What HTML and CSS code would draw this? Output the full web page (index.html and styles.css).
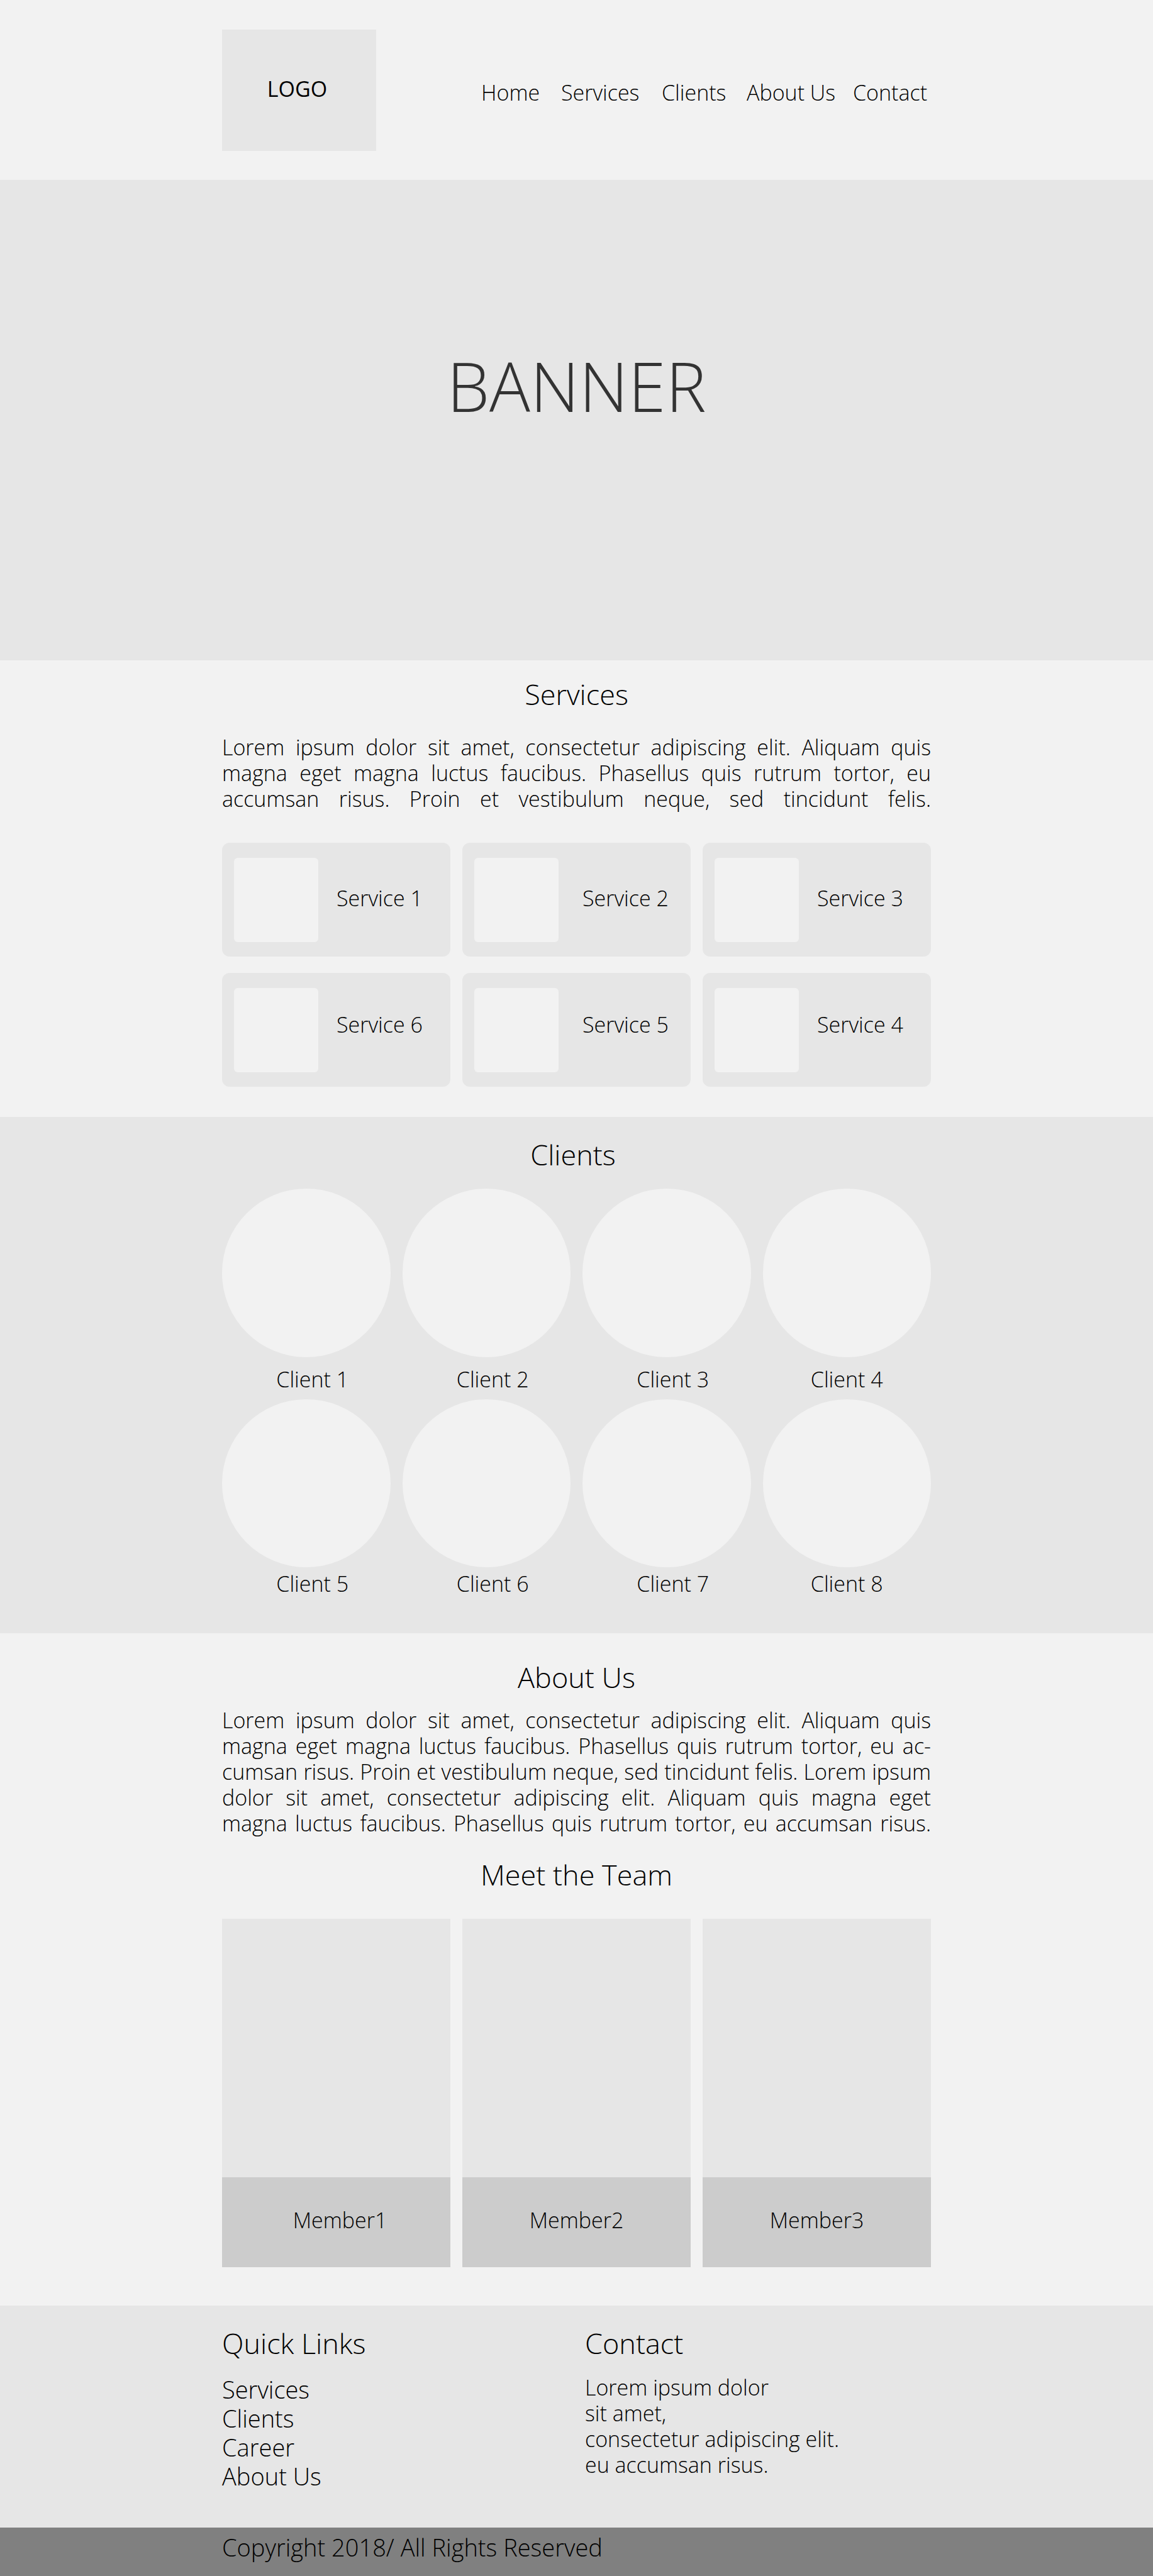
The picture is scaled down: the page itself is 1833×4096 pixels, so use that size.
FILE: index.html
```html
<!DOCTYPE html>
<html lang="en">
<head>
<meta charset="utf-8">
<meta name="viewport" content="width=device-width, initial-scale=1">
<title>Company</title>
<link rel="stylesheet" href="styles.css">
</head>
<body>
<header class="header">
  <div class="container header-row">
    <a class="logo" href="#">LOGO</a>
    <nav class="nav">
      <a href="#">Home</a>
      <a href="#services">Services</a>
      <a href="#clients">Clients</a>
      <a href="#about">About Us</a>
      <a href="#contact">Contact</a>
    </nav>
  </div>
</header>
<main>
  <section class="banner"><h1>BANNER</h1></section>

  <section class="services" id="services">
    <div class="container">
      <h2>Services</h2>
      <p class="copy">Lorem ipsum dolor sit amet, consectetur adipiscing elit. Aliquam quis magna eget magna luctus faucibus. Phasellus quis rutrum tortor, eu accumsan risus. Proin et vestibulum neque, sed tincidunt felis.</p>
      <ul class="service-grid">
        <li class="service"><span class="service-icon"></span><span class="service-name">Service 1</span></li>
        <li class="service service-wide"><span class="service-icon"></span><span class="service-name">Service 2</span></li>
        <li class="service"><span class="service-icon"></span><span class="service-name">Service 3</span></li>
        <li class="service service-raised"><span class="service-icon"></span><span class="service-name">Service 6</span></li>
        <li class="service service-wide service-raised"><span class="service-icon"></span><span class="service-name">Service 5</span></li>
        <li class="service service-raised"><span class="service-icon"></span><span class="service-name">Service 4</span></li>
      </ul>
    </div>
  </section>

  <section class="clients" id="clients">
    <div class="container">
      <h2>Clients</h2>
      <ul class="client-grid">
        <li class="client"><span class="client-photo"></span><span class="client-name">Client 1</span></li>
        <li class="client"><span class="client-photo"></span><span class="client-name">Client 2</span></li>
        <li class="client"><span class="client-photo"></span><span class="client-name">Client 3</span></li>
        <li class="client client-last"><span class="client-photo"></span><span class="client-name">Client 4</span></li>
      </ul>
      <ul class="client-grid client-grid-tight">
        <li class="client"><span class="client-photo"></span><span class="client-name">Client 5</span></li>
        <li class="client"><span class="client-photo"></span><span class="client-name">Client 6</span></li>
        <li class="client"><span class="client-photo"></span><span class="client-name">Client 7</span></li>
        <li class="client client-last"><span class="client-photo"></span><span class="client-name">Client 8</span></li>
      </ul>
    </div>
  </section>

  <section class="about" id="about">
    <div class="container">
      <h2>About Us</h2>
      <p class="copy">Lorem ipsum dolor sit amet, consectetur adipiscing elit. Aliquam quis magna eget magna luctus faucibus. Phasellus quis rutrum tortor, eu ac&shy;cumsan risus. Proin et vestibulum neque, sed tincidunt felis. Lorem ipsum dolor sit amet, consectetur adipiscing elit. Aliquam quis magna eget magna luctus faucibus. Phasellus quis rutrum tortor, eu accumsan risus.</p>
      <h2>Meet the Team</h2>
      <ul class="team-grid">
        <li class="member"><span class="member-name member-first">Member1</span></li>
        <li class="member"><span class="member-name">Member2</span></li>
        <li class="member"><span class="member-name">Member3</span></li>
      </ul>
    </div>
  </section>
</main>
<footer>
  <div class="footer">
    <div class="container footer-grid">
      <nav class="quick-links">
        <h2>Quick Links</h2>
        <a href="#services">Services</a>
        <a href="#clients">Clients</a>
        <a href="#">Career</a>
        <a href="#about">About Us</a>
      </nav>
      <div id="contact">
        <h2>Contact</h2>
        <address>Lorem ipsum dolor<br>sit amet,<br>consectetur adipiscing elit.<br>eu accumsan risus.</address>
      </div>
    </div>
  </div>
  <div class="copyright"><p class="container">Copyright 2018/ All Rights Reserved</p></div>
</footer>
</body>
</html>
```
FILE: styles.css
```css
* { box-sizing: border-box; margin: 0; padding: 0; }

body {
  background: #f2f2f2;
  color: #000;
  font: 300 34px/41px "Open Sans", "Noto Sans", sans-serif;
}
ul { list-style: none; }
a { color: inherit; text-decoration: none; }
address { font-style: normal; }
h2 { font-size: 45px; line-height: 56px; font-weight: 300; text-align: center; }

.container { width: min(1127px, 100% - 48px); margin: 0 auto; }
.copy { text-align: justify; text-align-last: justify; }

.header { padding: 47px 0 46px; }
.header-row { display: flex; align-items: center; justify-content: space-between; }
.logo {
  display: flex; align-items: center; justify-content: center;
  width: 245px; height: 193px; padding: 0 6px 4px 0;
  background: #e6e6e6; font-weight: 400;
}
.nav { display: grid; grid-template-columns: 127px 160px 135px 169px 124px; padding-top: 7px; }

.banner {
  display: flex; align-items: center; justify-content: center;
  min-height: 764px; padding-bottom: 109px;
  background: #e6e6e6;
}
h1 { color: #333; font-size: 108px; line-height: 140px; font-weight: 300; }

.services { padding: 26px 0 48px; }
.services .copy { margin: 36px 0 49px; }
.service-grid { display: grid; grid-template-columns: repeat(3, 1fr); gap: 26px 19px; }
.service {
  display: flex; align-items: center; gap: 29px;
  padding: 24px 19px 23px; border-radius: 12px; background: #e6e6e6;
}
.service-wide { gap: 38px; }
.service-name { padding-bottom: 5px; }
.service-raised .service-name { padding-bottom: 18px; }
.service-icon { width: 134px; height: 134px; border-radius: 6px; background: #f2f2f2; }

.clients { padding: 32px 0 58px; background: #e6e6e6; }
.clients h2 { padding-right: 11px; }
.client-grid { display: grid; grid-template-columns: repeat(4, 1fr); gap: 19px; margin-top: 26px; }
.client { display: flex; flex-direction: column; gap: 15px; text-align: center; }
.client-photo { aspect-ratio: 1; border-radius: 50%; background: #f2f2f2; }
.client-name { padding-left: 20px; }
.client-last .client-name { padding-left: 0; }
.client-grid-tight { margin-top: 11px; }
.client-grid-tight .client { gap: 6px; }

.about { padding: 42px 0 61px; }
.about .copy { margin: 20px 0 33px; }
.team-grid { display: grid; grid-template-columns: repeat(3, 1fr); gap: 19px; margin-top: 42px; }
.member { padding-top: 411px; background: #e6e6e6; text-align: center; }
.member-name { display: block; padding: 48px 0 54px; background: #ccc; }
.member-first { padding-left: 12px; }

.footer { padding: 32px 0 59px; background: #e6e6e6; }
.footer h2 { margin-bottom: 22px; text-align: left; }
.footer-grid { display: grid; grid-template-columns: 577px 1fr; }
.quick-links a { display: block; font-size: 38px; line-height: 46px; }
.copyright { padding: 8px 0 23px; background: gray; font-size: 38px; line-height: 46px; }
```
